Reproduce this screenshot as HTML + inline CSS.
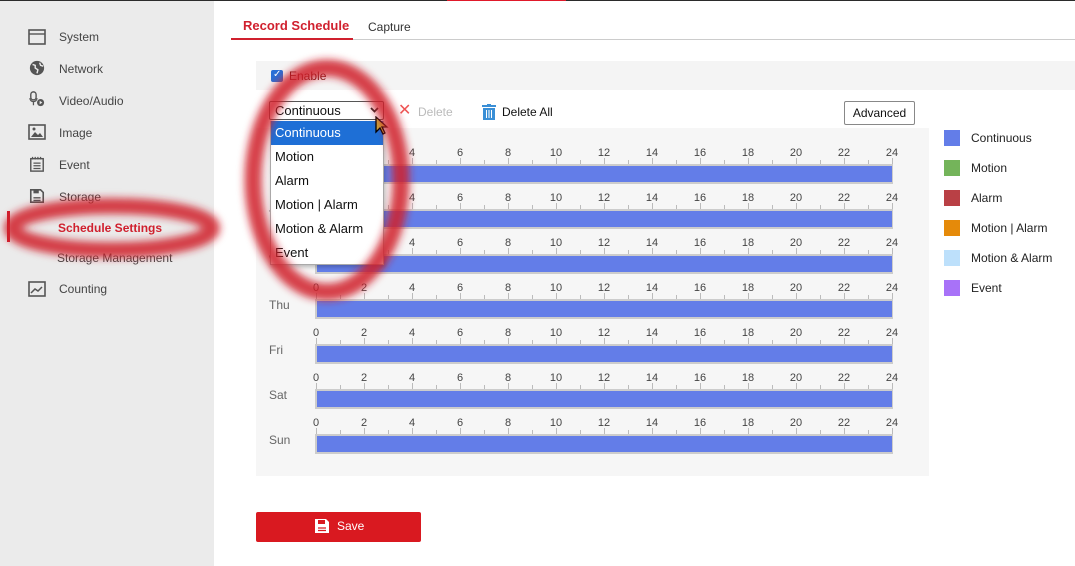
<!DOCTYPE html>
<html><head><meta charset="utf-8">
<style>
*{margin:0;padding:0;box-sizing:border-box}
body{width:1075px;height:566px;overflow:hidden;background:#fff;font-family:"Liberation Sans",Arial,sans-serif;position:relative;font-size:12px;color:#333}
.abs{position:absolute}
#top{left:0;top:0;width:1075px;height:1px;background:#2b2b2b}
#topred{left:447px;top:0;width:119px;height:1px;background:#e0192a}
#side{left:0;top:1px;width:214px;height:565px;background:#ebebeb}
.nav{position:absolute;left:59px;font-size:12px;color:#444}
.ic{position:absolute;left:28px;width:18px;height:16px}
.leg{position:absolute;left:944px;width:16px;height:16px}
.legt{position:absolute;left:971px;font-size:12px;color:#222}
.num{position:absolute;font-family:"Liberation Sans",Arial,sans-serif;font-size:11px;color:#444;transform:translateX(-50%)}
.day{position:absolute;left:269px;font-size:12px;color:#666}
.dd div{height:24px;line-height:24px;padding-left:4px;font-size:13px;color:#111}
</style></head><body>
<div id="top" class="abs"></div><div id="topred" class="abs"></div>
<div id="side" class="abs"></div>
<svg class="ic" style="top:29px" viewBox="0 0 18 16"><rect x="1" y="1" width="16" height="14" fill="none" stroke="#555" stroke-width="1.6"/><line x1="1" y1="5" x2="17" y2="5" stroke="#555" stroke-width="1.4"/></svg>
<div class="nav" style="top:30px">System</div>
<svg class="ic" style="top:60px" viewBox="0 0 18 18"><circle cx="9" cy="9" r="8" fill="#555"/><path d="M4 5l3 1 0 3 3 2-1 4M12 3l1 3 3 1" stroke="#ebebeb" stroke-width="1.6" fill="none"/></svg>
<div class="nav" style="top:62px">Network</div>
<svg class="ic" style="top:91px" viewBox="0 0 18 18"><rect x="2" y="1" width="6" height="9" rx="3" fill="none" stroke="#555" stroke-width="1.6"/><path d="M1 8a4 4 0 0 0 8 0M5 12v4" stroke="#555" stroke-width="1.4" fill="none"/><circle cx="13" cy="13" r="4" fill="#555"/><path d="M12 11l3 2-3 2z" fill="#ebebeb"/></svg>
<div class="nav" style="top:94px">Video/Audio</div>
<svg class="ic" style="top:124px" viewBox="0 0 18 16"><rect x="1" y="1" width="16" height="14" fill="none" stroke="#555" stroke-width="1.6"/><path d="M3 13l4-5 3 3 2-2 3 4z" fill="#555"/><circle cx="6" cy="5" r="1.5" fill="#555"/></svg>
<div class="nav" style="top:126px">Image</div>
<svg class="ic" style="top:156px" viewBox="0 0 18 18"><rect x="2" y="3" width="14" height="14" fill="none" stroke="#555" stroke-width="1.6"/><path d="M4 1v3M7 1v3M10 1v3M13 1v3M5 8h8M5 11h8M5 14h8" stroke="#555" stroke-width="1.4"/></svg>
<div class="nav" style="top:158px">Event</div>
<svg class="ic" style="top:188px" viewBox="0 0 18 18"><path d="M2 2h11l3 3v11H2z" fill="none" stroke="#555" stroke-width="1.8"/><rect x="5" y="2" width="6" height="4" fill="#555"/><path d="M5 11h8M5 14h8" stroke="#555" stroke-width="1.5"/></svg>
<div class="nav" style="top:190px">Storage</div>
<div class="abs" style="left:7px;top:211px;width:3px;height:31px;background:#d0202e"></div>
<div class="nav" style="top:221px;left:58px;color:#d0202e;font-weight:bold">Schedule Settings</div>
<div class="nav" style="top:251px;left:57px">Storage Management</div>
<svg class="ic" style="top:281px" viewBox="0 0 18 16"><rect x="1" y="1" width="16" height="14" fill="none" stroke="#555" stroke-width="1.6"/><path d="M3 12l4-4 3 2 4-4" stroke="#555" stroke-width="1.5" fill="none"/></svg>
<div class="nav" style="top:282px">Counting</div>

<div class="abs" style="left:243px;top:18px;font-size:13px;color:#d0202e;font-weight:bold">Record Schedule</div>
<div class="abs" style="left:368px;top:20px;font-size:12px;color:#333">Capture</div>
<div class="abs" style="left:231px;top:39px;width:844px;height:1px;background:#ccc"></div>
<div class="abs" style="left:231px;top:38px;width:122px;height:2px;background:#d0202e"></div>

<div class="abs" style="left:256px;top:61px;width:819px;height:29px;background:#f4f4f4"></div>
<div class="abs" style="left:271px;top:70px;width:12px;height:12px;background:#2a6fd6;border-radius:2px"></div>
<div class="abs" style="left:273px;top:69px;color:#fff;font-size:10px">✓</div>
<div class="abs" style="left:289px;top:69px;color:#6a1010">Enable</div>

<div class="abs" style="left:256px;top:128px;width:673px;height:348px;background:#f6f6f6"></div>
<div class="abs" style="left:398px;top:103px;color:#e55;font-size:16px;line-height:16px">✕</div>
<div class="abs" style="left:418px;top:105px;color:#bbb">Delete</div>
<svg class="abs" style="left:482px;top:104px" width="14" height="16" viewBox="0 0 14 16"><path d="M0 2h14M5 0h4" stroke="#3a8fd6" stroke-width="2"/><path d="M1 4h12v12H1z" fill="#3a8fd6"/><path d="M4.5 6v8M7 6v8M9.5 6v8" stroke="#fff" stroke-width="1"/></svg>
<div class="abs" style="left:502px;top:105px;color:#111">Delete All</div>
<div class="abs" style="left:844px;top:101px;width:71px;height:24px;border:1px solid #888;border-radius:2px;background:#fff;text-align:center;line-height:22px;color:#111">Advanced</div>

<div id="rows"></div>

<div class="leg" style="top:130px;background:#637de8"></div><div class="legt" style="top:131px">Continuous</div>
<div class="leg" style="top:160px;background:#74b45a"></div><div class="legt" style="top:161px">Motion</div>
<div class="leg" style="top:190px;background:#b94045"></div><div class="legt" style="top:191px">Alarm</div>
<div class="leg" style="top:220px;background:#e58a0a"></div><div class="legt" style="top:221px">Motion | Alarm</div>
<div class="leg" style="top:250px;background:#bde0fb"></div><div class="legt" style="top:251px">Motion &amp; Alarm</div>
<div class="leg" style="top:280px;background:#a872f8"></div><div class="legt" style="top:281px">Event</div>

<div class="abs" style="left:256px;top:512px;width:165px;height:30px;background:#d91920;border-radius:2px"></div>
<svg class="abs" style="left:315px;top:519px" width="14" height="14" viewBox="0 0 14 14"><path d="M0 0h11l3 3v11H0z" fill="#fff"/><rect x="3" y="1" width="7" height="4" fill="#d91920"/><path d="M3 9h8M3 11.5h8" stroke="#d91920" stroke-width="1.3"/></svg>
<div class="abs" style="left:337px;top:519px;color:#fff;font-size:12px">Save</div>

<div class="abs" style="left:269px;top:101px;width:115px;height:19px;border:1px solid #555;border-radius:2px;background:#fff"></div>
<div class="abs" style="left:275px;top:103px;font-size:13px;color:#111">Continuous</div>
<svg class="abs" style="left:370px;top:107px" width="9" height="6" viewBox="0 0 9 6"><path d="M1 1l3.5 3.5L8 1" stroke="#222" stroke-width="1.8" fill="none"/></svg>
<div class="abs dd" style="left:270px;top:121px;width:114px;height:144px;background:#fff;border:1px solid #aaa;border-top:none;box-shadow:1px 2px 4px rgba(0,0,0,.25)">
<div style="background:#1e6fd6;color:#fff">Continuous</div><div>Motion</div><div>Alarm</div><div>Motion | Alarm</div><div>Motion &amp; Alarm</div><div>Event</div></div>
<svg class="abs" style="left:375px;top:116px" width="16" height="22" viewBox="0 0 16 22"><path d="M1 1v15l4-4 3 6 2-1-3-6h5z" fill="#c8a63a" stroke="#000" stroke-width="1.3"/></svg>

<svg class="abs" style="left:0;top:0" width="1075" height="566"><defs><filter id="b" x="-20%" y="-20%" width="140%" height="140%"><feGaussianBlur stdDeviation="4"/></filter></defs>
<g filter="url(#b)" fill="none" stroke="#d0202a" stroke-opacity=".85">
<ellipse cx="112" cy="228" rx="100" ry="22" stroke-width="16"/>
<ellipse cx="327" cy="180" rx="74" ry="112" stroke-width="17"/>
</g></svg>

<script>
var days=["Mon","Tue","Wed","Thu","Fri","Sat","Sun"],h="";
for(var d=0;d<7;d++){var y=145+45*d;
 for(var i=0;i<=24;i+=2)h+='<div class="num" style="left:'+(316+i*24)+'px;top:'+(y+2)+'px">'+i+'</div>';
 for(var i=0;i<=24;i++)h+='<div class="abs" style="left:'+(316+i*24)+'px;top:'+(y+13+(i%2?2:0))+'px;width:1px;height:'+(i%2?4:6)+'px;background:#bbb"></div>';
 h+='<div class="abs" style="left:315px;top:'+(y+19)+'px;width:578px;height:20px;background:#637de8;border:2px solid #ccc;border-right-width:1px"></div>';
 h+='<div class="day" style="top:'+(y+9+45*0+9)+'px">'+days[d]+'</div>';}
document.getElementById("rows").innerHTML=h;
</script>
</body></html>
